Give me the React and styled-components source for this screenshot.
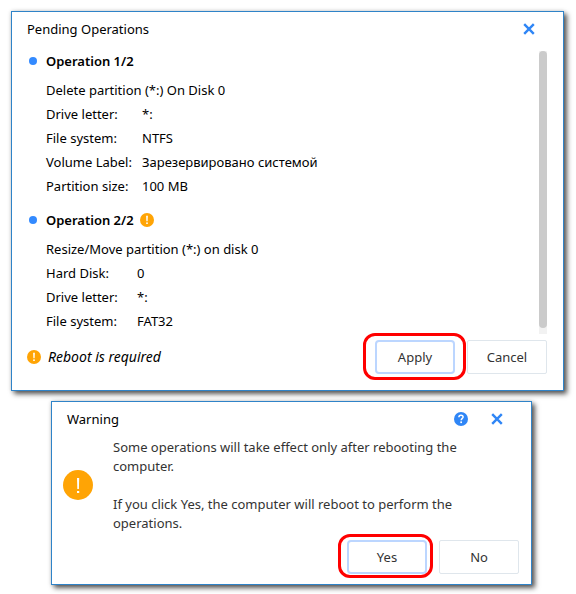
import React from "react";
import styled, { createGlobalStyle } from "styled-components";

const GlobalStyle = createGlobalStyle`
    * {
        box-sizing: border-box;
    }

    body {
        margin: 0;
        background: #fff;
        color: #000;
        font-family: "Noto Sans", "Open Sans", sans-serif;
        font-size: 13px;
        line-height: 24px;
    }
`;

const Page = styled.main`
    display: flex;
    flex-direction: column;
    gap: 10px;
    padding: 11px 12px 9px 11px;
`;

const Dialog = styled.section`
    margin: ${({ $inset }) => ($inset ? "0 32px 0 40px" : "0")};
    padding: 0 ${({ $inset }) => ($inset ? "12px" : "16px")} ${({ $inset }) => ($inset ? "10px" : "16px")} ${({ $inset }) => ($inset ? "11px" : "15px")};
    background: #fff;
    border: 1px solid #2f83c8;
    box-shadow: 3px 3px 5px rgba(0, 0, 0, 0.65), 0 0 4px rgba(0, 0, 0, 0.15);
`;

const Header = styled.header`
    display: flex;
    align-items: center;
    gap: 21px;
    height: 34px;
    padding: ${({ $inset }) => ($inset ? "0 14px 0 4px" : "0 10px 0 0")};
`;

const Title = styled.h1`
    flex: 1;
    margin: 0;
    font-size: 13px;
    font-weight: 400;
`;

const IconButton = styled.button`
    display: flex;
    padding: 0;
    border: none;
    background: none;
    cursor: pointer;
`;

const ScrollArea = styled.div`
    display: flex;
    justify-content: space-between;
`;

const Track = styled.div`
    width: 8px;
    margin-top: 5px;
    background: #f2f2f2;
`;

const Thumb = styled.div`
    height: 98%;
    border-radius: 4px;
    background: #cbcbcb;
`;

const Operations = styled.ul`
    display: flex;
    flex-direction: column;
    gap: 7px;
    margin: 0;
    padding: 0 0 1px;
    list-style: none;
`;

const Operation = styled.li`
    padding-left: 19px;
`;

const OperationTitle = styled.h2`
    display: flex;
    align-items: center;
    gap: 6px;
    height: 30px;
    margin: 0 0 2px -17px;
    font-size: 13px;
    font-weight: 600;

    &::before {
        content: "";
        width: 8px;
        height: 8px;
        margin-right: 3px;
        border-radius: 50%;
        background: #338aff;
    }
`;

const Summary = styled.p`
    margin: 0;
`;

const Details = styled.dl`
    display: grid;
    grid-template-columns: ${({ $labelWidth }) => $labelWidth} 1fr;
    margin: 0;

    dd {
        margin: 0;
    }
`;

const Footer = styled.footer`
    display: flex;
    align-items: center;
    justify-content: flex-end;
    gap: 12px;
    margin-top: ${({ $gap }) => $gap};
`;

const Note = styled.p`
    display: flex;
    align-items: center;
    flex: 1;
    gap: 7px;
    margin: 0;
    font-size: 14px;
    font-style: italic;
`;

const Button = styled.button`
    width: 80px;
    height: 34px;
    padding: 0;
    border: ${({ $primary }) => ($primary ? "2px solid #bcd6ff" : "1px solid #dfe6ec")};
    border-radius: ${({ $primary }) => ($primary ? "4px" : "2px")};
    background: #fff;
    color: #333;
    font: inherit;
    cursor: pointer;
`;

const Marked = styled.span`
    position: relative;
    display: flex;

    &::after {
        content: "";
        position: absolute;
        inset: ${({ $spread }) => $spread};
        border: 3px solid #ff0000;
        border-radius: 12px;
        pointer-events: none;
    }
`;

const Message = styled.div`
    display: flex;
    align-items: center;
    gap: 20px;
    color: #333;
    line-height: 19px;
`;

const MessageText = styled.div`
    flex: 1;
    padding: 2px 50px 0 0;

    p {
        margin: 0;
    }

    p + p {
        margin-top: 19px;
    }
`;

const CloseIcon = () => (
    <svg width="16" height="16" viewBox="0 0 16 16" aria-hidden="true">
        <path d="M3.2 3.2l9.6 9.6M12.8 3.2l-9.6 9.6" stroke="#2f86f6" strokeWidth="2.4" />
    </svg>
);

const HelpIcon = () => (
    <svg width="14" height="14" viewBox="0 0 14 14" aria-hidden="true">
        <circle cx="7" cy="7" r="7" fill="#2f86f6" />
        <path d="M4.9 5.3c0-1.3.9-2.1 2.1-2.1s2.1.7 2.1 1.8c0 1.4-1.9 1.5-1.9 3.2" fill="none" stroke="#fff" strokeWidth="1.5" />
        <rect x="6.3" y="9.4" width="1.7" height="1.7" fill="#fff" />
    </svg>
);

const SmallAlert = () => (
    <svg width="14" height="14" viewBox="0 0 14 14" aria-hidden="true">
        <circle cx="7" cy="7" r="7" fill="#ffa405" />
        <path d="M6.1 2.8h1.8l-.3 5.4H6.4z" fill="#fff" />
        <rect x="6.2" y="9.4" width="1.6" height="1.6" fill="#fff" />
    </svg>
);

const LargeAlert = () => (
    <svg width="30" height="30" viewBox="0 0 30 30" aria-hidden="true">
        <circle cx="15" cy="15" r="15" fill="#ffa405" />
        <path d="M14 8h2.2l-.3 11h-1.6z" fill="#fff" />
        <rect x="14" y="21" width="2.2" height="2" fill="#fff" />
    </svg>
);

const operations = [
    {
        title: "Operation 1/2",
        summary: "Delete partition (*:) On Disk 0",
        labelWidth: "96px",
        details: [
            ["Drive letter:", "*:"],
            ["File system:", "NTFS"],
            ["Volume Label:", "Зарезервировано системой"],
            ["Partition size:", "100 MB"],
        ],
    },
    {
        title: "Operation 2/2",
        alert: true,
        summary: "Resize/Move partition (*:) on disk 0",
        labelWidth: "91px",
        details: [
            ["Hard Disk:", "0"],
            ["Drive letter:", "*:"],
            ["File system:", "FAT32"],
        ],
    },
];

const PendingOperations = () => {
    return (
        <Dialog role="dialog" aria-labelledby="pending-title">
            <Header>
                <Title id="pending-title">Pending Operations</Title>
                <IconButton type="button" aria-label="Close">
                    <CloseIcon />
                </IconButton>
            </Header>
            <ScrollArea>
                <Operations>
                    {operations.map((op) => (
                        <Operation key={op.title}>
                            <OperationTitle>
                                {op.title}
                                {op.alert && <SmallAlert />}
                            </OperationTitle>
                            <Summary>{op.summary}</Summary>
                            <Details $labelWidth={op.labelWidth}>
                                {op.details.map(([label, value]) => (
                                    <React.Fragment key={label}>
                                        <dt>{label}</dt>
                                        <dd>{value}</dd>
                                    </React.Fragment>
                                ))}
                            </Details>
                        </Operation>
                    ))}
                </Operations>
                <Track>
                    <Thumb />
                </Track>
            </ScrollArea>
            <Footer $gap="6px">
                <Note>
                    <SmallAlert />
                    Reboot is required
                </Note>
                <Marked $spread="-7px -11px -6px -12px">
                    <Button type="button" $primary>Apply</Button>
                </Marked>
                <Button type="button">Cancel</Button>
            </Footer>
        </Dialog>
    );
};

const Warning = () => {
    return (
        <Dialog role="dialog" aria-labelledby="warning-title" $inset>
            <Header $inset>
                <Title id="warning-title">Warning</Title>
                <IconButton type="button" aria-label="Help">
                    <HelpIcon />
                </IconButton>
                <IconButton type="button" aria-label="Close">
                    <CloseIcon />
                </IconButton>
            </Header>
            <Message>
                <LargeAlert />
                <MessageText>
                    <p>Some operations will take effect only after rebooting the computer.</p>
                    <p>If you click Yes, the computer will reboot to perform the operations.</p>
                </MessageText>
            </Message>
            <Footer $gap="7px">
                <Marked $spread="-6px -6px -4px -9px">
                    <Button type="button" $primary>Yes</Button>
                </Marked>
                <Button type="button">No</Button>
            </Footer>
        </Dialog>
    );
};

const App = () => {
    return (
        <>
            <GlobalStyle />
            <Page>
                <PendingOperations />
                <Warning />
            </Page>
        </>
    );
};

export default App;
